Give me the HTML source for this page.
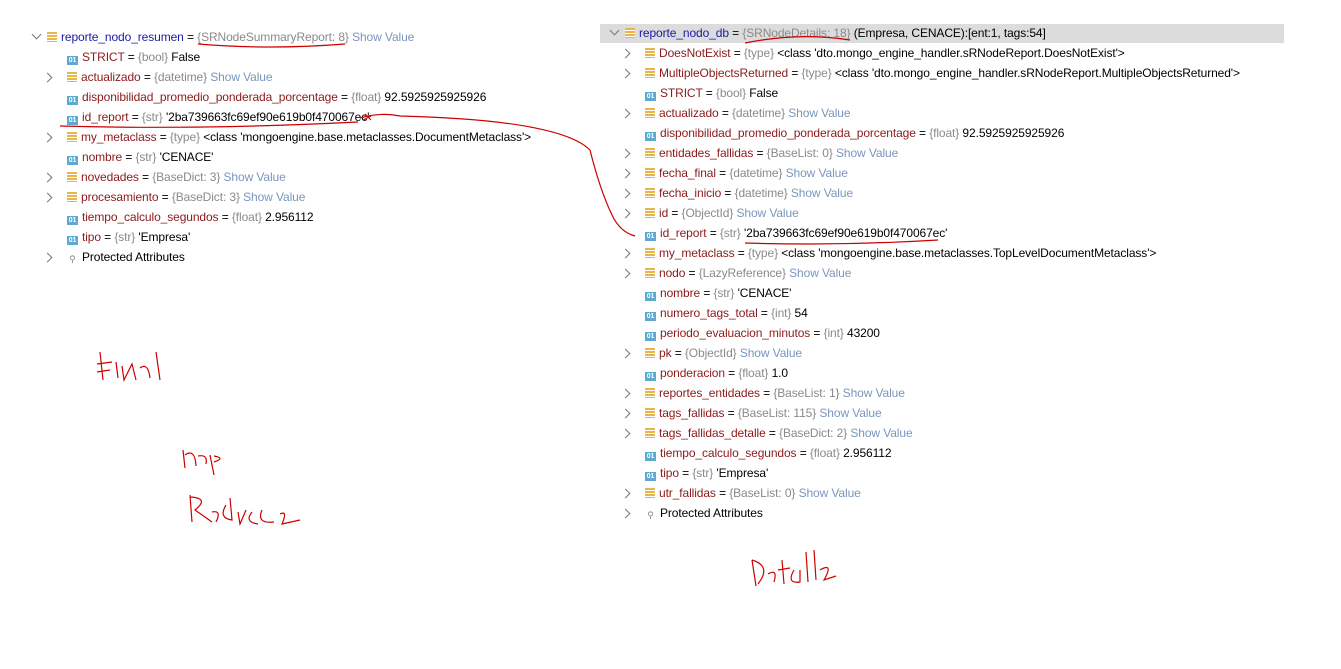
<!DOCTYPE html>
<html><head><meta charset="utf-8"><style>
body{margin:0;width:1341px;height:669px;background:#fff;position:relative;overflow:hidden;font-family:"Liberation Sans",sans-serif;font-size:12px;color:#000}
.r{position:absolute;height:20px;line-height:20px;white-space:nowrap;letter-spacing:-0.1px}
.n{color:#8b1a1a}.rn{color:#1a1aa6}
.t{color:#8a8a8a}.s{color:#7a96bd}
.ar{position:absolute;width:6px;height:6px;border-right:1.3px solid #777;border-bottom:1.3px solid #777}
.ic{display:inline-block;width:11px;height:9px;vertical-align:-1px;margin-right:4px}
.i1{background:#5ea9cf;color:#fff;font-size:7px;line-height:9px;text-align:center;font-weight:bold}
.i2{background:repeating-linear-gradient(#e8b64a 0 2px,#fff 2px 3px);height:10px;width:10px}
</style></head><body>
<div style="position:absolute;left:600px;top:24px;width:684px;height:19px;background:#dcdcdc"></div>
<div id="c"></div>
<svg width="1341" height="669" style="position:absolute;left:0;top:0" fill="none" stroke="#c00" stroke-width="1.2">
<path d="M198 44 Q270 50 345 44"/>
<path d="M60 126 Q200 130 358 122"/>
<path d="M360 118 Q380 112 400 116 Q560 120 590 150 Q600 190 612 215 Q620 232 635 236"/>
<path d="M365 114 l6 6 M363 120 l8 -4"/>
<path d="M745 43 Q800 32 850 40"/>
<path d="M745 243 Q840 246 938 240"/>
<path d="M100 352 L103 380 M97 364 L112 362 M97 372 L110 370 M116 362 L118 378 M122 366 L124 380 L132 364 L136 380 M140 368 Q148 362 150 378 M156 352 L160 380"/>
<path d="M183 450 L185 468 M185 455 Q195 448 196 466 M198 456 Q208 454 206 464 M210 455 L214 475 M214 456 Q226 458 214 462"/>
<path d="M190 495 L192 522 M190 497 Q210 498 195 510 L212 522 M212 512 Q222 510 216 522 M226 505 Q218 518 232 520 L230 498 M238 512 L240 524 L246 510 M252 512 Q244 522 258 524 M262 510 Q256 524 274 522 M280 514 Q288 510 282 524 L300 520"/>
<path d="M752 560 L756 586 M752 560 Q772 566 758 584 M768 574 Q778 568 774 582 M782 560 L784 584 M778 570 L790 568 M794 570 Q786 584 800 582 L800 570 M806 552 L808 582 M814 550 L816 580 M820 570 Q834 562 824 580 L836 576"/>
</svg>
<script>
const L=[[0,1,2,'reporte_nodo_resumen','SRNodeSummaryReport: 8',' Show Value'],
[1,0,1,'STRICT','bool','False'],[1,1,2,'actualizado','datetime',' Show Value'],
[1,0,1,'disponibilidad_promedio_ponderada_porcentage','float','92.5925925925926'],
[1,0,1,'id_report','str',"'2ba739663fc69ef90e619b0f470067ec'"],
[1,1,2,'my_metaclass','type',"<class 'mongoengine.base.metaclasses.DocumentMetaclass'>"],
[1,0,1,'nombre','str',"'CENACE'"],[1,1,2,'novedades','BaseDict: 3',' Show Value'],
[1,1,2,'procesamiento','BaseDict: 3',' Show Value'],[1,0,1,'tiempo_calculo_segundos','float','2.956112'],
[1,0,1,'tipo','str',"'Empresa'"],[1,1,3,'Protected Attributes']];
const R=[[0,1,2,'reporte_nodo_db','SRNodeDetails: 18','(Empresa, CENACE):[ent:1, tags:54]'],
[1,1,2,'DoesNotExist','type',"<class 'dto.mongo_engine_handler.sRNodeReport.DoesNotExist'>"],
[1,1,2,'MultipleObjectsReturned','type',"<class 'dto.mongo_engine_handler.sRNodeReport.MultipleObjectsReturned'>"],
[1,0,1,'STRICT','bool','False'],[1,1,2,'actualizado','datetime',' Show Value'],
[1,0,1,'disponibilidad_promedio_ponderada_porcentage','float','92.5925925925926'],
[1,1,2,'entidades_fallidas','BaseList: 0',' Show Value'],[1,1,2,'fecha_final','datetime',' Show Value'],
[1,1,2,'fecha_inicio','datetime',' Show Value'],[1,1,2,'id','ObjectId',' Show Value'],
[1,0,1,'id_report','str',"'2ba739663fc69ef90e619b0f470067ec'"],
[1,1,2,'my_metaclass','type',"<class 'mongoengine.base.metaclasses.TopLevelDocumentMetaclass'>"],
[1,1,2,'nodo','LazyReference',' Show Value'],[1,0,1,'nombre','str',"'CENACE'"],
[1,0,1,'numero_tags_total','int','54'],[1,0,1,'periodo_evaluacion_minutos','int','43200'],
[1,1,2,'pk','ObjectId',' Show Value'],[1,0,1,'ponderacion','float','1.0'],
[1,1,2,'reportes_entidades','BaseList: 1',' Show Value'],[1,1,2,'tags_fallidas','BaseList: 115',' Show Value'],
[1,1,2,'tags_fallidas_detalle','BaseDict: 2',' Show Value'],[1,0,1,'tiempo_calculo_segundos','float','2.956112'],
[1,0,1,'tipo','str',"'Empresa'"],[1,1,2,'utr_fallidas','BaseList: 0',' Show Value'],[1,1,3,'Protected Attributes']];
const esc=s=>s.replace(/&/g,'&amp;').replace(/</g,'&lt;');
let h='';
function tree(d,x0,y0){d.forEach((e,i)=>{const y=y0+i*20,ix=x0+e[0]*20;
 if(e[1]){h+=e[0]==0?`<div class="ar" style="left:${ix-14}px;top:${y+4}px;transform:rotate(45deg)"></div>`:`<div class="ar" style="left:${ix-23}px;top:${y+7}px;transform:rotate(-45deg)"></div>`;}
 let ic=e[2]==1?'<span class="ic i1">01</span>':e[2]==2?'<span class="ic i2"></span>':'<span class="ic" style="color:#888;font-size:9px;text-align:center">&#9906;</span>';
 let txt=e[2]==3?e[3]:`<span class="${e[0]?'n':'rn'}">${e[3]}</span> = <span class="t">{${e[4]}}</span> ${e[5].startsWith(' Show')?'<span class="s">'+e[5].trim()+'</span>':esc(e[5])}`;
 h+=`<div class="r" style="left:${ix}px;top:${y}px">${ic}${txt}</div>`;});}
tree(L,47,27);tree(R,625,23);
document.getElementById('c').innerHTML=h;
</script>
</body></html>
